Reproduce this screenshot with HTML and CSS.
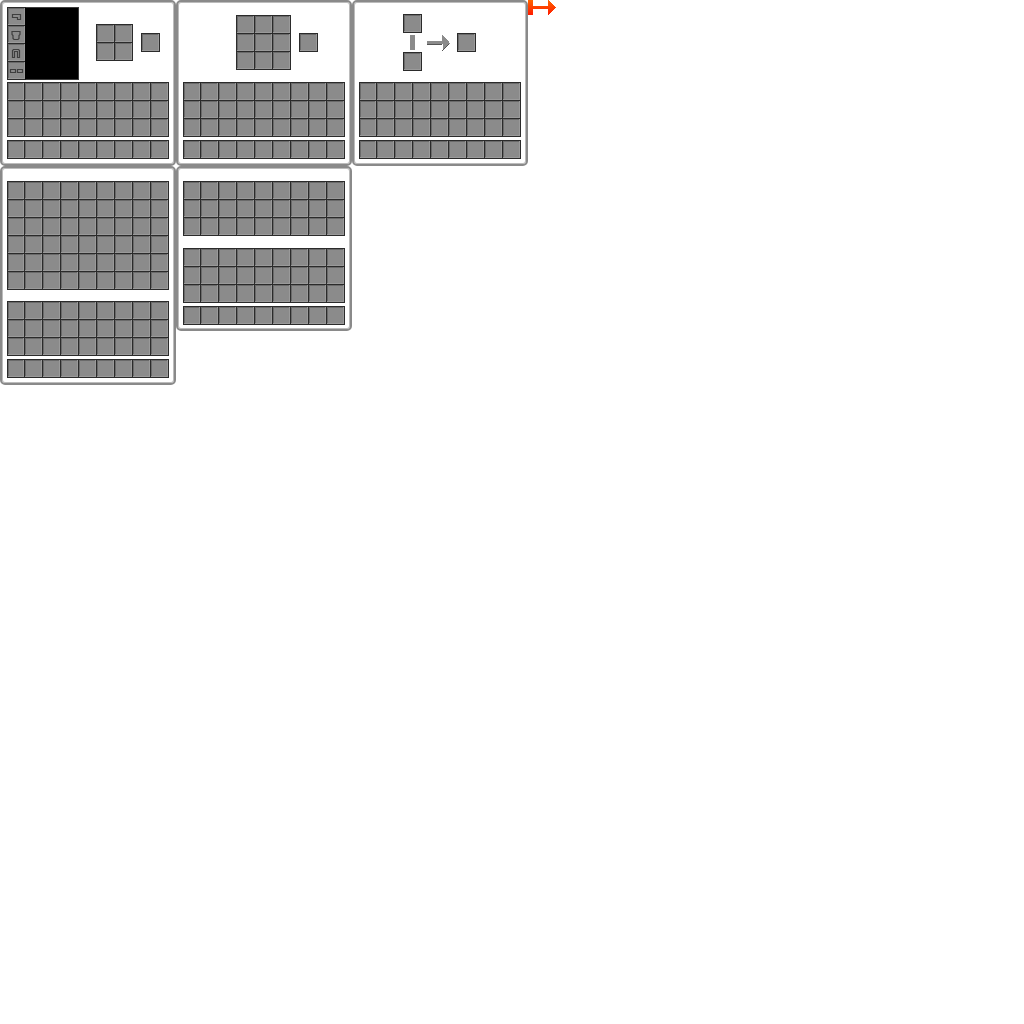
FILE: index.html
```html
<!DOCTYPE html>
<html lang="en">
<head>
<meta charset="utf-8">
<title>Container sheets</title>
<link rel="stylesheet" href="styles.css">
</head>
<body>
<main class="sheet">
  <section class="panel panel-short">
    <div class="top top-player">
      <div class="armor">
        <div class="grid grid-one armor-col">
          <div class="slot"><svg class="icon" viewBox="0 0 17 17"><path d="M4.5 6.5h8v5h-3v-2h-5zM4.5 6.5v3"/></svg></div>
          <div class="slot"><svg class="icon" viewBox="0 0 17 17"><path d="M4 5.5h8v3l-1 1v3l-1 1H6l-1-1v-3l-1-1z"/></svg></div>
          <div class="slot"><svg class="icon" viewBox="0 0 17 17"><path d="M4.5 13.5v-7l1-1h5l1 1v7h-2v-6h-3v6z"/></svg></div>
          <div class="slot"><svg class="icon" viewBox="0 0 17 17"><path d="M2.5 7.5h5v3h-5zM9.5 7.5h5v3h-5z"/></svg></div>
        </div>
        <div class="preview"></div>
      </div>
      <div class="grid grid-two craft-small">
        <div class="slot"></div><div class="slot"></div>
        <div class="slot"></div><div class="slot"></div>
      </div>
      <div class="grid grid-one result-small"><div class="slot"></div></div>
    </div>
    <div class="grid inv">
      <div class="slot"></div><div class="slot"></div><div class="slot"></div><div class="slot"></div><div class="slot"></div><div class="slot"></div><div class="slot"></div><div class="slot"></div><div class="slot"></div>
      <div class="slot"></div><div class="slot"></div><div class="slot"></div><div class="slot"></div><div class="slot"></div><div class="slot"></div><div class="slot"></div><div class="slot"></div><div class="slot"></div>
      <div class="slot"></div><div class="slot"></div><div class="slot"></div><div class="slot"></div><div class="slot"></div><div class="slot"></div><div class="slot"></div><div class="slot"></div><div class="slot"></div>
    </div>
    <div class="grid inv hotbar">
      <div class="slot"></div><div class="slot"></div><div class="slot"></div><div class="slot"></div><div class="slot"></div><div class="slot"></div><div class="slot"></div><div class="slot"></div><div class="slot"></div>
    </div>
  </section>

  <section class="panel panel-short">
    <div class="top top-craft">
      <div class="grid grid-three">
        <div class="slot"></div><div class="slot"></div><div class="slot"></div>
        <div class="slot"></div><div class="slot"></div><div class="slot"></div>
        <div class="slot"></div><div class="slot"></div><div class="slot"></div>
      </div>
      <div class="grid grid-one result-craft"><div class="slot"></div></div>
    </div>
    <div class="grid inv">
      <div class="slot"></div><div class="slot"></div><div class="slot"></div><div class="slot"></div><div class="slot"></div><div class="slot"></div><div class="slot"></div><div class="slot"></div><div class="slot"></div>
      <div class="slot"></div><div class="slot"></div><div class="slot"></div><div class="slot"></div><div class="slot"></div><div class="slot"></div><div class="slot"></div><div class="slot"></div><div class="slot"></div>
      <div class="slot"></div><div class="slot"></div><div class="slot"></div><div class="slot"></div><div class="slot"></div><div class="slot"></div><div class="slot"></div><div class="slot"></div><div class="slot"></div>
    </div>
    <div class="grid inv hotbar">
      <div class="slot"></div><div class="slot"></div><div class="slot"></div><div class="slot"></div><div class="slot"></div><div class="slot"></div><div class="slot"></div><div class="slot"></div><div class="slot"></div>
    </div>
  </section>

  <section class="panel panel-short">
    <div class="top top-furnace">
      <div class="furnace-col">
        <div class="grid grid-one"><div class="slot"></div></div>
        <div class="fuel-bar"></div>
        <div class="grid grid-one"><div class="slot"></div></div>
      </div>
      <svg class="progress" viewBox="0 0 23 16" shape-rendering="crispEdges">
        <path class="progress-fill" d="M0 6h15V0h1v1h1v1h1v1h1v1h1v1h1v1h1v2h1v1h-1v1h-1v1h-1v1h-1v1h-1v1h-1v1h-1v-6H0z"/>
        <path class="progress-shade" d="M0 9h15v1H0zM15 15h1v-1h1v-1h1v-1h1v-1h1v-1h1v-1h1v1h-1v1h-1v1h-1v1h-1v1h-1v1h-1v1h-1z"/>
      </svg>
      <div class="grid grid-one result-furnace"><div class="slot"></div></div>
    </div>
    <div class="grid inv">
      <div class="slot"></div><div class="slot"></div><div class="slot"></div><div class="slot"></div><div class="slot"></div><div class="slot"></div><div class="slot"></div><div class="slot"></div><div class="slot"></div>
      <div class="slot"></div><div class="slot"></div><div class="slot"></div><div class="slot"></div><div class="slot"></div><div class="slot"></div><div class="slot"></div><div class="slot"></div><div class="slot"></div>
      <div class="slot"></div><div class="slot"></div><div class="slot"></div><div class="slot"></div><div class="slot"></div><div class="slot"></div><div class="slot"></div><div class="slot"></div><div class="slot"></div>
    </div>
    <div class="grid inv hotbar">
      <div class="slot"></div><div class="slot"></div><div class="slot"></div><div class="slot"></div><div class="slot"></div><div class="slot"></div><div class="slot"></div><div class="slot"></div><div class="slot"></div>
    </div>
  </section>

  <svg class="flame-arrow" viewBox="0 0 28 15" shape-rendering="crispEdges">
    <defs>
      <linearGradient id="flame" x1="0" y1="0" x2="0" y2="1">
        <stop offset="0" stop-color="#ff6400"/>
        <stop offset="1" stop-color="#ff1c00"/>
      </linearGradient>
    </defs>
    <path fill="url(#flame)" d="M0 0h5v6h15V0h1v1h1v1h1v1h1v1h1v1h1v1h1v1h1v1h-1v1h-1v1h-1v1h-1v1h-1v1h-1v1h-1v1h-1v-6H5v6H0z"/>
  </svg>

  <section class="panel panel-tall">
    <div class="grid inv chest-first">
      <div class="slot"></div><div class="slot"></div><div class="slot"></div><div class="slot"></div><div class="slot"></div><div class="slot"></div><div class="slot"></div><div class="slot"></div><div class="slot"></div>
      <div class="slot"></div><div class="slot"></div><div class="slot"></div><div class="slot"></div><div class="slot"></div><div class="slot"></div><div class="slot"></div><div class="slot"></div><div class="slot"></div>
      <div class="slot"></div><div class="slot"></div><div class="slot"></div><div class="slot"></div><div class="slot"></div><div class="slot"></div><div class="slot"></div><div class="slot"></div><div class="slot"></div>
      <div class="slot"></div><div class="slot"></div><div class="slot"></div><div class="slot"></div><div class="slot"></div><div class="slot"></div><div class="slot"></div><div class="slot"></div><div class="slot"></div>
      <div class="slot"></div><div class="slot"></div><div class="slot"></div><div class="slot"></div><div class="slot"></div><div class="slot"></div><div class="slot"></div><div class="slot"></div><div class="slot"></div>
      <div class="slot"></div><div class="slot"></div><div class="slot"></div><div class="slot"></div><div class="slot"></div><div class="slot"></div><div class="slot"></div><div class="slot"></div><div class="slot"></div>
    </div>
    <div class="grid inv chest-next chest-next-tall">
      <div class="slot"></div><div class="slot"></div><div class="slot"></div><div class="slot"></div><div class="slot"></div><div class="slot"></div><div class="slot"></div><div class="slot"></div><div class="slot"></div>
      <div class="slot"></div><div class="slot"></div><div class="slot"></div><div class="slot"></div><div class="slot"></div><div class="slot"></div><div class="slot"></div><div class="slot"></div><div class="slot"></div>
      <div class="slot"></div><div class="slot"></div><div class="slot"></div><div class="slot"></div><div class="slot"></div><div class="slot"></div><div class="slot"></div><div class="slot"></div><div class="slot"></div>
    </div>
    <div class="grid inv hotbar">
      <div class="slot"></div><div class="slot"></div><div class="slot"></div><div class="slot"></div><div class="slot"></div><div class="slot"></div><div class="slot"></div><div class="slot"></div><div class="slot"></div>
    </div>
  </section>

  <section class="panel panel-mid">
    <div class="grid inv chest-first">
      <div class="slot"></div><div class="slot"></div><div class="slot"></div><div class="slot"></div><div class="slot"></div><div class="slot"></div><div class="slot"></div><div class="slot"></div><div class="slot"></div>
      <div class="slot"></div><div class="slot"></div><div class="slot"></div><div class="slot"></div><div class="slot"></div><div class="slot"></div><div class="slot"></div><div class="slot"></div><div class="slot"></div>
      <div class="slot"></div><div class="slot"></div><div class="slot"></div><div class="slot"></div><div class="slot"></div><div class="slot"></div><div class="slot"></div><div class="slot"></div><div class="slot"></div>
    </div>
    <div class="grid inv chest-next">
      <div class="slot"></div><div class="slot"></div><div class="slot"></div><div class="slot"></div><div class="slot"></div><div class="slot"></div><div class="slot"></div><div class="slot"></div><div class="slot"></div>
      <div class="slot"></div><div class="slot"></div><div class="slot"></div><div class="slot"></div><div class="slot"></div><div class="slot"></div><div class="slot"></div><div class="slot"></div><div class="slot"></div>
      <div class="slot"></div><div class="slot"></div><div class="slot"></div><div class="slot"></div><div class="slot"></div><div class="slot"></div><div class="slot"></div><div class="slot"></div><div class="slot"></div>
    </div>
    <div class="grid inv hotbar">
      <div class="slot"></div><div class="slot"></div><div class="slot"></div><div class="slot"></div><div class="slot"></div><div class="slot"></div><div class="slot"></div><div class="slot"></div><div class="slot"></div>
    </div>
  </section>
</main>
</body>
</html>
```

FILE: styles.css
```css
* { box-sizing: border-box; }

body {
  margin: 0;
  background: #fff;
}

.sheet {
  display: grid;
  grid-template-columns: 176px 176px 176px 28px;
  align-items: start;
  width: 556px;
}

.panel {
  width: 176px;
  padding: 5px;
  background: #fff;
  border: 2px solid #8a8a8a;
  border-radius: 5px;
  box-shadow: inset 0 0 0 1px #bcbcbc;
}

.panel-short { height: 166px; }
.panel-tall { height: 219px; padding-top: 13px; }
.panel-mid { height: 165px; padding-top: 13px; }

.grid {
  display: grid;
  justify-content: start;
  border-right: 1px solid #2b2b2b;
  border-bottom: 1px solid #2b2b2b;
}

.grid-one { grid-template-columns: 18px; width: 19px; }
.grid-two { grid-template-columns: repeat(2, 18px); width: 37px; }
.grid-three { grid-template-columns: repeat(3, 18px); width: 55px; }
.inv { grid-template-columns: 17px repeat(8, 18px); width: 162px; }

.slot {
  height: 18px;
  background: #8b8b8b;
  border-top: 1px solid #2b2b2b;
  border-left: 1px solid #2b2b2b;
  box-shadow: inset -1px -1px 0 #9a9a9a, inset 1px 1px 0 #6a6a6a;
}

.hotbar { margin-top: 3px; }
.chest-next { margin-top: 12px; }
.chest-next-tall { margin-top: 11px; }

.top { display: flex; align-items: flex-start; height: 75px; }

.armor { display: flex; }
.armor-col { width: 18px; border-right: 0; }

.preview {
  width: 54px;
  height: 73px;
  background: #000;
  border: 1px solid #3c3c3c;
  border-left-color: #000;
}

.icon { display: block; width: 17px; height: 17px; }
.icon path { fill: none; stroke: #3e3e3e; stroke-width: 1.2; }

.craft-small { margin: 17px 0 0 17px; }
.result-small { margin: 26px 0 0 8px; }

.top-craft { padding: 8px 0 0 53px; }
.result-craft { margin: 18px 0 0 8px; }

.top-furnace { padding: 7px 0 0 44px; }
.furnace-col { display: flex; flex-direction: column; width: 19px; }
.fuel-bar { width: 5px; height: 15px; margin: 2px 0 2px 7px; background: #8b8b8b; }
.progress { width: 23px; height: 16px; margin: 21px 0 0 5px; }
.progress-fill { fill: #8b8b8b; }
.progress-shade { fill: #555; }
.result-furnace { margin: 19px 0 0 7px; }

.flame-arrow { display: block; width: 28px; height: 15px; }
```
